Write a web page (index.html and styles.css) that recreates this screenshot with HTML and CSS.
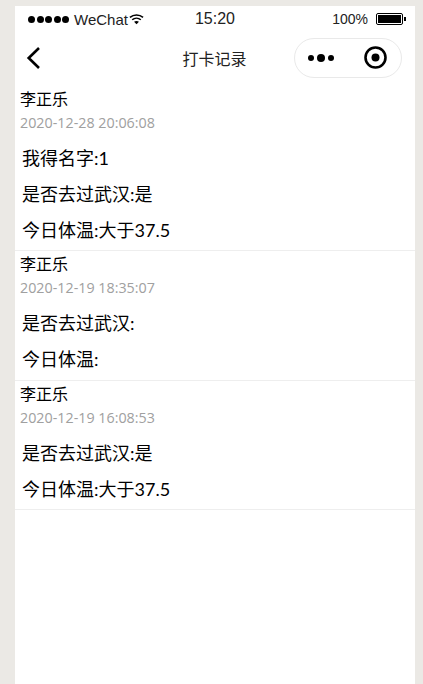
FILE: index.html
```html
<!DOCTYPE html>
<html lang="zh-CN">
<head>
    <meta charset="UTF-8">
    <meta name="viewport" content="width=device-width, initial-scale=1.0">
    <title>打卡记录</title>
    <link rel="stylesheet" href="styles.css">
</head>
<body>
    <div class="phone">
        <div class="status-bar">
            <div class="status-left">
                <span class="signal">
                    <i></i><i></i><i></i><i></i><i></i>
                </span>
                <span class="carrier">WeChat</span>
                <svg class="wifi" width="15" height="12" viewBox="0 0 16 12">
                    <path d="M1 4.2C5 .8 11 .8 15 4.2" fill="none" stroke="#000" stroke-width="1.7"/>
                    <path d="M3.4 6.8C6 4.7 10 4.7 12.6 6.8" fill="none" stroke="#000" stroke-width="1.7"/>
                    <path d="M5.4 9 8 11.6 10.6 9C9 7.8 7 7.8 5.4 9Z" fill="#000"/>
                </svg>
            </div>
            <div class="status-time">15:20</div>
            <div class="status-right">
                <span>100%</span>
                <span class="battery"><span class="battery-fill"></span></span>
                <span class="battery-tip"></span>
            </div>
        </div>

        <div class="nav-bar">
            <svg class="back" width="16" height="24" viewBox="0 0 16 24">
                <path d="M13 2 2.7 12 13 22" fill="none" stroke="#000" stroke-width="2.6"/>
            </svg>
            <div class="nav-title">打卡记录</div>
            <div class="capsule">
                <svg width="28" height="10" viewBox="0 0 28 10">
                    <circle cx="4" cy="5" r="3" fill="#000"/>
                    <circle cx="14" cy="5" r="4" fill="#000"/>
                    <circle cx="24" cy="5" r="3" fill="#000"/>
                </svg>
                <svg width="23" height="23" viewBox="0 0 23 23">
                    <circle cx="11.5" cy="11.5" r="10" fill="none" stroke="#000" stroke-width="2.6"/>
                    <circle cx="11.5" cy="11.5" r="4" fill="#000"/>
                </svg>
            </div>
        </div>

        <div class="record">
            <div class="name">李正乐</div>
            <div class="time">2020-12-28 20:06:08</div>
            <div class="lines">
                <div class="line">我得名字:1</div>
                <div class="line">是否去过武汉:是</div>
                <div class="line">今日体温:大于37.5</div>
            </div>
        </div>
        <div class="record">
            <div class="name">李正乐</div>
            <div class="time">2020-12-19 18:35:07</div>
            <div class="lines">
                <div class="line">是否去过武汉:</div>
                <div class="line">今日体温:</div>
            </div>
        </div>
        <div class="record">
            <div class="name">李正乐</div>
            <div class="time">2020-12-19 16:08:53</div>
            <div class="lines">
                <div class="line">是否去过武汉:是</div>
                <div class="line">今日体温:大于37.5</div>
            </div>
        </div>
    </div>
</body>
</html>
```

FILE: styles.css
```css
html, body {
    height: 100%;
}

body {
    margin: 0;
    background-color: #ebe9e5;
    font-family: "Open Sans", "Noto Sans CJK SC", sans-serif;
    color: #000;
    overflow: hidden;
}

.phone {
    width: 400px;
    height: 678px;
    margin: 6px 0 0 15px;
    background-color: #fff;
}

.status-bar {
    display: grid;
    grid-template-columns: 1fr auto 1fr;
    align-items: center;
    height: 26px;
    padding: 0 9px 0 13px;
    font-family: "Liberation Sans", sans-serif;
    font-size: 14px;
    color: #222;
}

.status-left, .status-right {
    display: flex;
    align-items: center;
}

.status-right {
    justify-content: flex-end;
}

.signal {
    display: flex;
    gap: 1.5px;
    margin-right: 5px;
}

.signal i {
    width: 7px;
    height: 7px;
    border-radius: 50%;
    background-color: #000;
}

.carrier {
    font-size: 15px;
}

.wifi {
    margin-left: 1px;
}

.status-time {
    font-size: 16px;
    padding-right: 4px;
}

.battery {
    display: block;
    width: 23px;
    height: 8px;
    margin-left: 8px;
    padding: 1px;
    border: 1px solid #000;
    border-radius: 2px;
}

.battery-fill {
    display: block;
    height: 100%;
    background-color: #000;
}

.battery-tip {
    width: 2px;
    height: 4px;
    margin-left: 1px;
    background-color: #000;
}

.nav-bar {
    display: flex;
    align-items: center;
    height: 51px;
    padding: 0 13px 2px 11px;
}

.nav-title {
    flex: 1;
    text-align: center;
    font-size: 16px;
    padding-left: 93px;
    color: #222;
}

.capsule {
    display: flex;
    align-items: center;
    justify-content: space-between;
    box-sizing: border-box;
    width: 108px;
    height: 40px;
    padding: 0 14px 0 12px;
    border: 1px solid #e9e9e9;
    border-radius: 20px;
}

.record {
    padding: 2px 0 3px;
    border-bottom: 1px solid #eee;
}

.nav-bar + .record {
    padding: 3px 0 2px;
}

.record:last-child {
    padding-bottom: 2px;
}

.name {
    margin-left: 5px;
    font-size: 16px;
    line-height: 23px;
}

.time {
    margin-left: 5px;
    font-size: 14.3px;
    line-height: 23px;
    color: #a0a0a0;
}

.lines {
    padding: 6px 0 0 7px;
}

.line {
    font-family: Lato, "Noto Sans CJK SC", sans-serif;
    font-size: 18px;
    line-height: 36px;
}
```
